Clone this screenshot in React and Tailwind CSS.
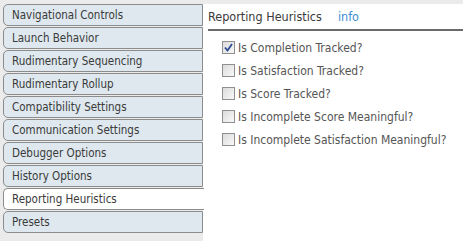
import React from "react";

const tabs = [
  "Navigational Controls",
  "Launch Behavior",
  "Rudimentary Sequencing",
  "Rudimentary Rollup",
  "Compatibility Settings",
  "Communication Settings",
  "Debugger Options",
  "History Options",
  "Reporting Heuristics",
  "Presets",
];

const options = [
  ["Is Completion Tracked?", true],
  ["Is Satisfaction Tracked?", false],
  ["Is Score Tracked?", false],
  ["Is Incomplete Score Meaningful?", false],
  ["Is Incomplete Satisfaction Meaningful?", false],
];

function Box({ checked }) {
  return (
    <span className="w-[13px] h-[13px] border border-[#8f8f8f] bg-gradient-to-br from-[#dcdcdc] to-[#f8f8f8] flex items-center justify-center">
      {checked && (
        <svg width="9" height="9" viewBox="0 0 9 9">
          <path d="M1 4.5 L3.5 7.5 L8 1" stroke="#2d4c8f" strokeWidth="1.8" fill="none" />
        </svg>
      )}
    </span>
  );
}

export default function App() {
  return (
    <div
      className="w-[463px] h-[241px] bg-[#ebebeb] pt-[4px] flex text-[12px] leading-none"
      style={{ fontFamily: '"DejaVu Sans Condensed", "DejaVu Sans", sans-serif' }}
    >
      <div className="w-[203px] pl-[3px] flex flex-col gap-px text-[11.5px]">
        {tabs.map((t) => {
          const active = t === "Reporting Heuristics";
          return (
            <div
              key={t}
              className={
                "h-[22px] border border-[#8c8c8c] rounded-l-[5px] pl-[8px] pt-[2px] flex items-center text-[#3a3a3a] " +
                (active ? "bg-white border-r-0 mr-[-1px] relative" : "bg-[#dee8ee]")
              }
            >
              {t}
            </div>
          );
        })}
      </div>
      <div className="flex-1 bg-white pl-[5px]">
        <div className="h-[27px] flex items-center border-b-2 border-[#6a6a6a] text-[#3a3a3a] text-[12.5px] pt-[1px]">
          <span>Reporting Heuristics</span>
          <span className="ml-[16px] text-[#3d8ed0]">info</span>
        </div>
        <div className="flex flex-col pl-[14px] pt-[5px]">
          {options.map(([label, c]) => (
            <div key={label} className="h-[23px] flex items-center gap-[3px] text-[#555]">
              <Box checked={c} />
              <span>{label}</span>
            </div>
          ))}
        </div>
      </div>
    </div>
  );
}
